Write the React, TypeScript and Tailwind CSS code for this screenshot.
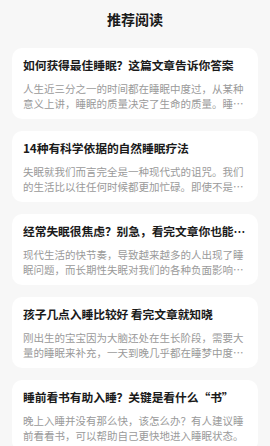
const articles = [
  {
    title: "如何获得最佳睡眠？这篇文章告诉你答案",
    body: "人生近三分之一的时间都在睡眠中度过，从某种意义上讲，睡眠的质量决定了生命的质量。睡眠不好会带来很多问题。",
  },
  {
    title: "14种有科学依据的自然睡眠疗法",
    body: "失眠就我们而言完全是一种现代式的诅咒。我们的生活比以往任何时候都更加忙碌。即使不是工作的原因。",
  },
  {
    title: "经常失眠很焦虑？别急，看完文章你也能睡个好觉",
    body: "现代生活的快节奏，导致越来越多的人出现了睡眠问题，而长期性失眠对我们的各种负面影响很大。",
  },
  {
    title: "孩子几点入睡比较好 看完文章就知晓",
    body: "刚出生的宝宝因为大脑还处在生长阶段，需要大量的睡眠来补充，一天到晚几乎都在睡梦中度过。",
  },
  {
    title: "睡前看书有助入睡？关键是看什么“书”",
    body: "晚上入睡并没有那么快，该怎么办？有人建议睡前看看书，可以帮助自己更快地进入睡眠状态。",
  },
];

// 推荐阅读列表
export default function App() {
  return (
    <div
      className="h-[446px] overflow-hidden bg-[#f7f7f7] px-3"
      style={{ fontFamily: '"Noto Sans CJK SC", "Noto Sans", sans-serif' }}
    >
      <h1 className="pt-[9px] text-center text-[14px] font-bold leading-5 text-[#1a1a1a]">
        推荐阅读
      </h1>
      <div className="mt-[19px] flex flex-col gap-[12px]">
        {articles.map((a) => (
          <div key={a.title} className="rounded-[10px] bg-white px-[11px] pt-[9px] pb-[8px]">
            <p className="truncate text-[11.8px] font-bold leading-4 tracking-[-0.1px] text-[#1a1a1a]">
              {a.title}
            </p>
            <p className="mt-[8px] line-clamp-2 text-[10.5px] leading-[15px] text-[#9a9a9a]">
              {a.body}
            </p>
          </div>
        ))}
      </div>
    </div>
  );
}
